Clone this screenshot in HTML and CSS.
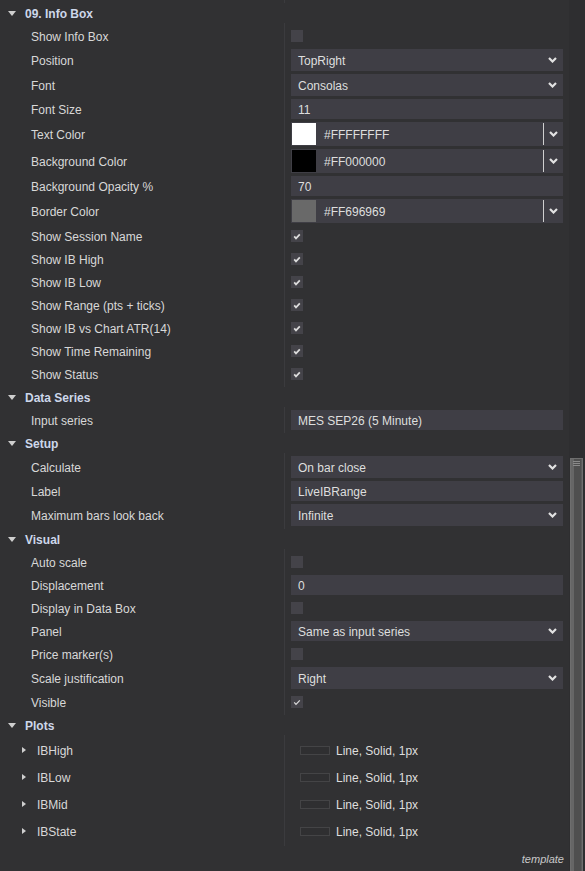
FILE: index.html
```html
<!DOCTYPE html>
<html lang="en">
<head>
    <meta charset="UTF-8">
    <meta name="viewport" content="width=device-width, initial-scale=1.0">
    <title>Indicator Properties</title>
    <link rel="stylesheet" href="styles.css">
</head>
<body>
    <div class="panel">
        <div class="grid">
            <div class="tail"></div>

            <section class="group">
                <div class="group-head"><span class="caret"></span>09. Info Box</div>
                <div class="group-body">
                    <div class="row"><div class="label">Show Info Box</div><div class="value"><span class="check"></span></div></div>
                    <div class="row"><div class="label">Position</div><div class="value"><div class="select"><span class="txt">TopRight</span><svg class="chev" width="9" height="6" viewBox="0 0 9 6"><polyline points="1,1 4.5,4.5 8,1"/></svg></div></div></div>
                    <div class="row"><div class="label">Font</div><div class="value"><div class="select"><span class="txt">Consolas</span><svg class="chev" width="9" height="6" viewBox="0 0 9 6"><polyline points="1,1 4.5,4.5 8,1"/></svg></div></div></div>
                    <div class="row"><div class="label">Font Size</div><div class="value"><div class="input"><span class="txt">11</span></div></div></div>
                    <div class="row"><div class="label">Text Color</div><div class="value"><div class="color"><span class="swatch swatch-white"></span><span class="hex txt">#FFFFFFFF</span><span class="color-drop"><svg class="chev" width="9" height="6" viewBox="0 0 9 6"><polyline points="1,1 4.5,4.5 8,1"/></svg></span></div></div></div>
                    <div class="row"><div class="label">Background Color</div><div class="value"><div class="color"><span class="swatch swatch-black"></span><span class="hex txt">#FF000000</span><span class="color-drop"><svg class="chev" width="9" height="6" viewBox="0 0 9 6"><polyline points="1,1 4.5,4.5 8,1"/></svg></span></div></div></div>
                    <div class="row"><div class="label">Background Opacity %</div><div class="value"><div class="input"><span class="txt">70</span></div></div></div>
                    <div class="row"><div class="label">Border Color</div><div class="value"><div class="color"><span class="swatch swatch-grey"></span><span class="hex txt">#FF696969</span><span class="color-drop"><svg class="chev" width="9" height="6" viewBox="0 0 9 6"><polyline points="1,1 4.5,4.5 8,1"/></svg></span></div></div></div>
                    <div class="row"><div class="label">Show Session Name</div><div class="value"><span class="check on"><svg width="8" height="7" viewBox="0 0 8 7"><polyline points="1.2,3.4 3,5.4 6.8,1.4"/></svg></span></div></div>
                    <div class="row"><div class="label">Show IB High</div><div class="value"><span class="check on"><svg width="8" height="7" viewBox="0 0 8 7"><polyline points="1.2,3.4 3,5.4 6.8,1.4"/></svg></span></div></div>
                    <div class="row"><div class="label">Show IB Low</div><div class="value"><span class="check on"><svg width="8" height="7" viewBox="0 0 8 7"><polyline points="1.2,3.4 3,5.4 6.8,1.4"/></svg></span></div></div>
                    <div class="row"><div class="label">Show Range (pts + ticks)</div><div class="value"><span class="check on"><svg width="8" height="7" viewBox="0 0 8 7"><polyline points="1.2,3.4 3,5.4 6.8,1.4"/></svg></span></div></div>
                    <div class="row"><div class="label">Show IB vs Chart ATR(14)</div><div class="value"><span class="check on"><svg width="8" height="7" viewBox="0 0 8 7"><polyline points="1.2,3.4 3,5.4 6.8,1.4"/></svg></span></div></div>
                    <div class="row"><div class="label">Show Time Remaining</div><div class="value"><span class="check on"><svg width="8" height="7" viewBox="0 0 8 7"><polyline points="1.2,3.4 3,5.4 6.8,1.4"/></svg></span></div></div>
                    <div class="row"><div class="label">Show Status</div><div class="value"><span class="check on"><svg width="8" height="7" viewBox="0 0 8 7"><polyline points="1.2,3.4 3,5.4 6.8,1.4"/></svg></span></div></div>
                </div>
            </section>

            <section class="group">
                <div class="group-head"><span class="caret"></span>Data Series</div>
                <div class="group-body">
                    <div class="row"><div class="label">Input series</div><div class="value"><div class="input"><span class="txt">MES SEP26 (5 Minute)</span></div></div></div>
                </div>
            </section>

            <section class="group">
                <div class="group-head"><span class="caret"></span>Setup</div>
                <div class="group-body">
                    <div class="row"><div class="label">Calculate</div><div class="value"><div class="select"><span class="txt">On bar close</span><svg class="chev" width="9" height="6" viewBox="0 0 9 6"><polyline points="1,1 4.5,4.5 8,1"/></svg></div></div></div>
                    <div class="row"><div class="label">Label</div><div class="value"><div class="input"><span class="txt">LiveIBRange</span></div></div></div>
                    <div class="row"><div class="label">Maximum bars look back</div><div class="value"><div class="select"><span class="txt">Infinite</span><svg class="chev" width="9" height="6" viewBox="0 0 9 6"><polyline points="1,1 4.5,4.5 8,1"/></svg></div></div></div>
                </div>
            </section>

            <section class="group">
                <div class="group-head"><span class="caret"></span>Visual</div>
                <div class="group-body">
                    <div class="row"><div class="label">Auto scale</div><div class="value"><span class="check"></span></div></div>
                    <div class="row"><div class="label">Displacement</div><div class="value"><div class="input"><span class="txt">0</span></div></div></div>
                    <div class="row"><div class="label">Display in Data Box</div><div class="value"><span class="check"></span></div></div>
                    <div class="row"><div class="label">Panel</div><div class="value"><div class="select short"><span class="txt">Same as input series</span><svg class="chev" width="9" height="6" viewBox="0 0 9 6"><polyline points="1,1 4.5,4.5 8,1"/></svg></div></div></div>
                    <div class="row"><div class="label">Price marker(s)</div><div class="value"><span class="check"></span></div></div>
                    <div class="row"><div class="label">Scale justification</div><div class="value"><div class="select"><span class="txt">Right</span><svg class="chev" width="9" height="6" viewBox="0 0 9 6"><polyline points="1,1 4.5,4.5 8,1"/></svg></div></div></div>
                    <div class="row"><div class="label">Visible</div><div class="value"><span class="check on thin"><svg width="8" height="7" viewBox="0 0 8 7"><polyline points="1.2,3.4 3,5.4 6.8,1.4"/></svg></span></div></div>
                </div>
            </section>

            <section class="group">
                <div class="group-head"><span class="caret"></span>Plots</div>
                <div class="group-body">
                    <div class="row plot"><div class="label"><span class="caret-right"></span>IBHigh</div><div class="value"><span class="line-sample"></span><span class="txt">Line, Solid, 1px</span></div></div>
                    <div class="row plot"><div class="label"><span class="caret-right"></span>IBLow</div><div class="value"><span class="line-sample"></span><span class="txt">Line, Solid, 1px</span></div></div>
                    <div class="row plot"><div class="label"><span class="caret-right"></span>IBMid</div><div class="value"><span class="line-sample"></span><span class="txt">Line, Solid, 1px</span></div></div>
                    <div class="row plot"><div class="label"><span class="caret-right"></span>IBState</div><div class="value"><span class="line-sample"></span><span class="txt">Line, Solid, 1px</span></div></div>
                </div>
            </section>

            <div class="footer">template</div>
        </div>

        <div class="scrollbar">
            <div class="thumb">
                <span class="grip"></span>
                <span class="grip"></span>
                <span class="grip"></span>
            </div>
        </div>
    </div>
</body>
</html>
```

FILE: styles.css
```css
* {
    margin: 0;
    padding: 0;
    box-sizing: border-box;
}

body {
    font-family: 'Liberation Sans', Arial, sans-serif;
    font-size: 12px;
    background: #313133;
    color: #d8d8d8;
    overflow: hidden;
}

.panel {
    display: flex;
    width: 585px;
    height: 871px;
    overflow: hidden;
}

.grid {
    width: 569px;
    display: flex;
    flex-direction: column;
}

/* column divider between label and value cells */
.tail,
.group-body {
    background: linear-gradient(to right, transparent 284px, #3b3b3e 284px, #3b3b3e 285px, transparent 285px);
}

.tail {
    height: 3px;
}

.group-head {
    height: 20px;
    display: flex;
    align-items: center;
    padding: 2px 0 0 8px;
    font-weight: bold;
    color: #cdd7ea;
}

.caret {
    width: 0;
    height: 0;
    border-left: 4px solid transparent;
    border-right: 4px solid transparent;
    border-top: 5px solid #cfcfcf;
    margin: 0 9px 2px 0;
}

.group-body {
    display: flex;
    flex-direction: column;
    gap: 3px;
    padding: 3px 0;
}

.row {
    display: grid;
    grid-template-columns: 285px 1fr;
    align-items: center;
    min-height: 20px;
}

.label {
    padding: 2px 0 0 31px;
    display: flex;
    align-items: center;
}

.value {
    padding: 0 6px;
    display: flex;
    align-items: center;
    color: #dedede;
}

.txt {
    padding-top: 2px;
}

.check {
    width: 12px;
    height: 12px;
    background: #444349;
    display: flex;
    align-items: center;
    justify-content: center;
}

.check svg polyline {
    fill: none;
    stroke: #dcdcdc;
    stroke-width: 1.7;
}

.check.thin svg polyline {
    stroke-width: 1.2;
}

.select,
.input,
.color {
    flex: 1;
    background: #3f3e45;
    display: flex;
    align-items: center;
}

.select {
    height: 22px;
    padding: 0 6px 0 7px;
    justify-content: space-between;
}

.select.short {
    height: 20px;
}

.input {
    height: 20px;
    padding-left: 7px;
}

.chev polyline {
    fill: none;
    stroke: #e2e2e2;
    stroke-width: 2.2;
}

.color {
    height: 24px;
    padding-left: 1px;
}

.swatch {
    width: 24px;
    height: 22px;
}

.swatch-white { background: #ffffff; }
.swatch-black { background: #000000; }
.swatch-grey { background: #696969; }

.hex {
    flex: 1;
    padding-left: 8px;
}

.color-drop {
    width: 20px;
    height: 22px;
    border-left: 1px solid #cfcfcf;
    display: flex;
    align-items: center;
    justify-content: center;
}

.row.plot {
    min-height: 24px;
}

.plot .label {
    padding-left: 22px;
}

.caret-right {
    width: 0;
    height: 0;
    border-top: 3.5px solid transparent;
    border-bottom: 3.5px solid transparent;
    border-left: 4px solid #cfcfcf;
    margin: 0 11px 2px 0;
}

.plot .value {
    padding-left: 15px;
}

.line-sample {
    width: 30px;
    height: 9px;
    border: 1px solid #444446;
    background: #2f2f31;
    margin-right: 6px;
}

.footer {
    height: 25px;
    display: flex;
    align-items: center;
    justify-content: flex-end;
    padding: 1px 5px 0 0;
    font-size: 11px;
    font-style: italic;
    color: #c8c8c8;
}

.scrollbar {
    width: 16px;
    background: #2e2e30;
    padding-top: 458px;
    padding-left: 1px;
}

.thumb {
    width: 13px;
    height: 420px;
    border: 1px solid #6e6e6e;
    background: linear-gradient(to right, #666 0, #666 3px, #4f4f4f 3px, #4f4f4f 10px, #5c5c5c 10px);
    display: flex;
    flex-direction: column;
    align-items: flex-end;
    gap: 1px;
    padding: 2px 2px 0 0;
}

.grip {
    width: 7px;
    height: 1px;
    background: #8a8a8a;
}
```
